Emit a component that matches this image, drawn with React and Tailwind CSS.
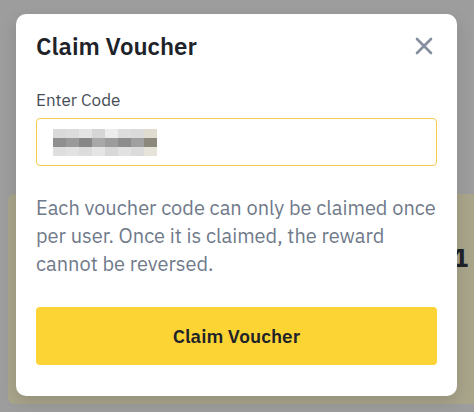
import React from 'react';

const codeBlocks = [
  ['bg-[#d9d9d9]', 'bg-[#dcdcdc]', 'bg-[#e4e4e4]', 'bg-[#d6d6d6]', 'bg-[#ececec]', 'bg-[#dddddd]', 'bg-[#dadada]', 'bg-[#e0ddd0]'],
  ['bg-[#8f8f8f]', 'bg-[#9a9a9a]', 'bg-[#878787]', 'bg-[#a8a8a8]', 'bg-[#9c9c9c]', 'bg-[#8d8d8d]', 'bg-[#9f9f9f]', 'bg-[#8c897c]'],
  ['bg-[#dedede]', 'bg-[#e2e2e2]', 'bg-[#dcdcdc]', 'bg-[#e5e5e5]', 'bg-[#d8d8d8]', 'bg-[#e1e1e1]', 'bg-[#dbdbdb]', 'bg-[#e6e4da]'],
];

const App = () => {
  return (
    <div className="relative w-[474px] h-[412px] overflow-hidden bg-[#9d9d9d] font-['IBM_Plex_Sans','Noto_Sans',sans-serif]">
      {/* page behind the overlay */}
      <div className="flex flex-col h-full">
        <div className="h-[194px]"></div>
        <div className="flex-1 ml-[8px] mb-[8px] rounded-l-md bg-[#a9a58b] flex justify-end pr-[6px] pt-[50px]">
          <span className="text-[26px] font-bold text-[#1e2329] leading-none">1</span>
        </div>
      </div>

      {/* modal */}
      <div className="absolute left-[16px] top-[14px] w-[441px] h-[382px] bg-white rounded-[10px] shadow-[0_6px_16px_rgba(0,0,0,0.12)] px-[20px] pt-[16px]">
        <div className="flex items-center justify-between h-[32px]">
          <h2 className="text-[24px] font-semibold text-[#1e2329] leading-[32px]">Claim Voucher</h2>
          <button className="mr-[4px] text-[#848e9c]">
            <svg width="18" height="18" viewBox="0 0 18 18" fill="none" stroke="currentColor" strokeWidth="2.6" strokeLinecap="round">
              <path d="M2 2L16 16M16 2L2 16" />
            </svg>
          </button>
        </div>

        <div className="mt-[26px] text-[17px] leading-[24px] text-[#474d57]">Enter Code</div>
        <div className="mt-[6px] h-[48px] rounded-[4px] border border-[#f0cd4f] flex items-center px-[16px]">
          <div className="flex flex-col">
            {codeBlocks.map((row, i) => (
              <div key={i} className="flex">
                {row.map((c, j) => (
                  <div key={j} className={`w-[13px] h-[9px] ${c}`}></div>
                ))}
              </div>
            ))}
          </div>
        </div>

        <p className="mt-[28px] text-[20px] leading-[28px] text-[#707a8a]">
          Each voucher code can only be claimed once per user. Once it is claimed, the reward cannot be reversed.
        </p>

        <button className="mt-[29px] w-full h-[58px] rounded-[4px] bg-[#fcd535] text-[19px] font-semibold text-[#1e2329]">
          Claim Voucher
        </button>
      </div>
    </div>
  );
};

export default App;
